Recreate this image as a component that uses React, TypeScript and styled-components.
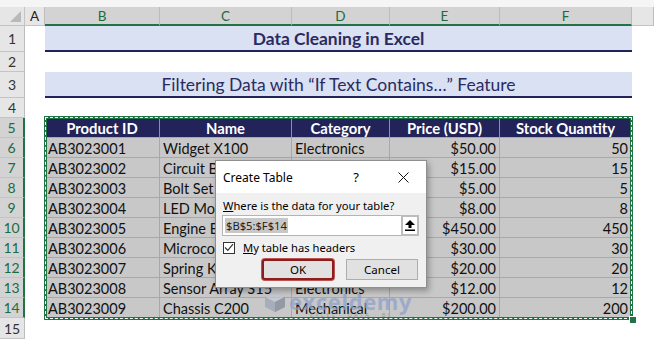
import styled, { createGlobalStyle } from "styled-components";

const GlobalStyle = createGlobalStyle`
  html, body {
    margin: 0;
    padding: 0;
    background: #ffffff;
  }
  body {
    font-family: Lato, "Liberation Sans", sans-serif;
  }
`;

const COLS = "25px 20px 115px 132px 98px 110px 132px 1fr";
const GREEN = "#217346";
const NAVY = "#222359";

type RowData = [string, string, string, string, string];

const rows: RowData[] = [
  ["AB3023001", "Widget X100", "Electronics", "$50.00", "50"],
  ["AB3023002", "Circuit Board", "Electronics", "$15.00", "15"],
  ["AB3023003", "Bolt Set", "Hardware", "$5.00", "5"],
  ["AB3023004", "LED Module", "Electronics", "$8.00", "8"],
  ["AB3023005", "Engine Belt", "Mechanical", "$450.00", "450"],
  ["AB3023006", "Microcontroller", "Electronics", "$30.00", "30"],
  ["AB3023007", "Spring Kit", "Hardware", "$20.00", "20"],
  ["AB3023008", "Sensor Array S15", "Electronics", "$12.00", "12"],
  ["AB3023009", "Chassis C200", "Mechanical", "$200.00", "200"],
];

const headers = ["Product ID", "Name", "Category", "Price (USD)", "Stock Quantity"];

const Page = styled.div`
  position: relative;
  width: 654px;
  height: 339px;
  overflow: hidden;
  background: #ffffff;
`;

const TopBand = styled.div`
  height: 7px;
  background: #f5f5f5;
`;

const Grid = styled.div<{ $h: number }>`
  display: grid;
  grid-template-columns: ${COLS};
  height: ${({ $h }) => $h}px;
`;

const Corner = styled.div`
  position: relative;
  background: #e6e6e6;
  border-right: 1px solid #c4c4c4;
  border-bottom: 1px solid #c4c4c4;
  box-sizing: border-box;
  &::after {
    content: "";
    position: absolute;
    right: 3px;
    bottom: 3px;
    width: 11px;
    height: 11px;
    background: #b9b9b9;
    clip-path: polygon(100% 0, 100% 100%, 0 100%);
  }
`;

const ColHead = styled.div<{ $sel?: boolean }>`
  display: flex;
  align-items: center;
  justify-content: center;
  box-sizing: border-box;
  font-size: 13.5px;
  background: ${({ $sel }) => ($sel ? "#d3d3d3" : "#e6e6e6")};
  color: ${({ $sel }) => ($sel ? "#1c6b40" : "#222222")};
  border-right: 1px solid #bdbdbd;
  border-bottom: ${({ $sel }) => ($sel ? `2px solid ${GREEN}` : "1px solid #c4c4c4")};
`;

const RowHead = styled.div<{ $sel?: boolean }>`
  display: flex;
  align-items: center;
  justify-content: center;
  box-sizing: border-box;
  font-size: 14px;
  background: ${({ $sel }) => ($sel ? "#d3d3d3" : "#e6e6e6")};
  color: ${({ $sel }) => ($sel ? "#1c6b40" : "#333333")};
  border-bottom: 1px solid #c4c4c4;
  border-right: ${({ $sel }) => ($sel ? `2px solid ${GREEN}` : "1px solid #bdbdbd")};
`;

const Blank = styled.div``;

const Banner = styled.div<{ $bold?: boolean }>`
  grid-column: span 5;
  display: flex;
  align-items: center;
  justify-content: center;
  box-sizing: border-box;
  background: #d9e1f2;
  border-bottom: 2px solid ${NAVY};
  color: #2b2b63;
  font-size: ${({ $bold }) => ($bold ? "17.4px" : "17.5px")};
  font-weight: ${({ $bold }) => ($bold ? 700 : 400)};
  padding-top: 1px;
`;

const HeadCell = styled.div`
  display: flex;
  align-items: center;
  justify-content: center;
  box-sizing: border-box;
  background: ${NAVY};
  color: #ffffff;
  font-weight: 700;
  font-size: 14.8px;
  border-right: 1px solid #8e8fa6;
  border-bottom: 1px solid #a9a9a9;
`;

const Cell = styled.div<{ $right?: boolean }>`
  display: flex;
  align-items: center;
  justify-content: ${({ $right }) => ($right ? "flex-end" : "flex-start")};
  box-sizing: border-box;
  padding: 1px 3px 0;
  background: #c8c8c8;
  color: #111111;
  font-size: 14.5px;
  white-space: nowrap;
  overflow: hidden;
  border-right: 1px solid #a8a8a8;
  border-bottom: 1px solid #a8a8a8;
`;

const Ants = styled.div`
  position: absolute;
  left: 44px;
  top: 116px;
  width: 589px;
  height: 204px;
  box-sizing: border-box;
  border: 3px solid ${GREEN};
  pointer-events: none;
  &::before {
    content: "";
    position: absolute;
    inset: -2px;
    border: 1px dashed #ffffff;
  }
  &::after {
    content: "";
    position: absolute;
    right: -6px;
    bottom: -6px;
    width: 6px;
    height: 6px;
    background: ${GREEN};
    border-left: 1px solid #fff;
    border-top: 1px solid #fff;
  }
`;

const Watermark = styled.div`
  position: absolute;
  left: 264px;
  top: 291px;
  display: flex;
  align-items: flex-start;
  gap: 3px;
  opacity: 0.7;
  pointer-events: none;
`;

const WmText = styled.div`
  display: flex;
  flex-direction: column;
  align-items: center;
  color: #8d9fc9;
  font-family: "Open Sans", sans-serif;
`;

const WmName = styled.span`
  font-size: 22px;
  font-weight: 700;
  line-height: 21px;
  letter-spacing: 0.6px;
`;

const WmTag = styled.span`
  font-size: 6px;
  letter-spacing: 2px;
  color: #8a8a8a;
  line-height: 7px;
`;

/* dialog */

const Dialog = styled.div`
  position: absolute;
  left: 215px;
  top: 160px;
  width: 212px;
  height: 128px;
  box-sizing: border-box;
  background: #f0f0f0;
  border: 1px solid #8f8f8f;
  box-shadow: 2px 3px 6px rgba(0, 0, 0, 0.3);
  font-family: "Noto Sans", "Open Sans", sans-serif;
  font-size: 11.2px;
  color: #000;
  display: flex;
  flex-direction: column;
`;

const TitleBar = styled.div`
  height: 32px;
  background: #ffffff;
  display: flex;
  align-items: center;
  padding-left: 7px;
`;

const TitleText = styled.span`
  flex: 1;
  font-size: 12px;
`;

const TitleButton = styled.span<{ $w: number }>`
  width: ${({ $w }) => $w}px;
  display: flex;
  align-items: center;
  justify-content: center;
  font-size: 13px;
`;

const Body = styled.div`
  padding: 4px 7px 0 6px;
  display: flex;
  flex-direction: column;
`;

const Prompt = styled.div`
  height: 17px;
  line-height: 17px;
  padding-left: 1px;
  u {
    text-decoration: underline;
  }
`;

const RefRow = styled.div`
  display: flex;
  height: 21px;
  margin-top: 1px;
`;

const RefInput = styled.div`
  flex: 1;
  box-sizing: border-box;
  background: #ffffff;
  border: 1px solid #b4b4b4;
  border-right: none;
  display: flex;
  align-items: center;
  padding-left: 2px;
`;

const Selected = styled.span`
  background: #c8c8c8;
  color: #222;
  padding: 0 1px;
  line-height: 15px;
`;

const RefButton = styled.div`
  width: 18px;
  box-sizing: border-box;
  border: 2px solid #bcbcbc;
  background: #fff;
  display: flex;
  align-items: center;
  justify-content: center;
`;

const CheckRow = styled.label`
  display: flex;
  align-items: center;
  gap: 8px;
  height: 17px;
  margin-top: 3px;
  padding-left: 1px;
  u {
    text-decoration: underline;
  }
`;

const CheckBox = styled.span`
  width: 12px;
  height: 12px;
  box-sizing: border-box;
  border: 1px solid #333;
  background: #fff;
  display: flex;
  align-items: center;
  justify-content: center;
`;

const ButtonRow = styled.div`
  display: flex;
  justify-content: flex-end;
  gap: 12px;
  margin-top: 3px;
  padding-right: 1px;
`;

const DlgButton = styled.button<{ $focus?: boolean }>`
  width: 72px;
  height: 21px;
  box-sizing: border-box;
  background: #e1e1e1;
  border: ${({ $focus }) => ($focus ? "2px solid #8c1d1d" : "1px solid #adadad")};
  border-radius: ${({ $focus }) => ($focus ? "3px" : "0")};
  box-shadow: ${({ $focus }) => ($focus ? "0 0 0 1px #b55" : "none")};
  font-family: inherit;
  font-size: 11.5px;
  color: #000;
  padding: 0;
`;

function UpArrow() {
  return (
    <svg width="10" height="11" viewBox="0 0 10 11">
      <polygon points="5,0 10,5 0,5" fill="#000" />
      <rect x="3.5" y="4" width="3" height="4" fill="#000" />
      <rect x="0" y="9.5" width="10" height="1.5" fill="#000" />
    </svg>
  );
}

function CloseX() {
  return (
    <svg width="11" height="11" viewBox="0 0 11 11">
      <path d="M0.5 0.5 L10.5 10.5 M10.5 0.5 L0.5 10.5" stroke="#111" strokeWidth="1" />
    </svg>
  );
}

function Check() {
  return (
    <svg width="10" height="9" viewBox="0 0 10 9">
      <path d="M1 4.5 L3.8 7.3 L9 1.2" fill="none" stroke="#333" strokeWidth="1.2" />
    </svg>
  );
}

function WmLogo() {
  return (
    <svg width="22" height="22" viewBox="0 0 22 22">
      <polygon points="11,1 21,6 21,16 11,21 1,16 1,6" fill="#9aa3b5" />
      <polygon points="11,1 21,6 11,11 1,6" fill="#c4cad6" />
      <polygon points="11,11 21,6 21,16 11,21" fill="#7d8799" />
    </svg>
  );
}

export default function App() {
  const colLetters = ["B", "C", "D", "E", "F"];

  return (
    <Page>
      <GlobalStyle />
      <TopBand />
      <Grid $h={19}>
        <Corner />
        <ColHead>A</ColHead>
        {colLetters.map((l) => (
          <ColHead key={l} $sel>
            {l}
          </ColHead>
        ))}
        <ColHead />
      </Grid>

      <Grid $h={26}>
        <RowHead>1</RowHead>
        <Blank />
        <Banner $bold>Data Cleaning in Excel</Banner>
        <Blank />
      </Grid>
      <Grid $h={20}>
        <RowHead>2</RowHead>
      </Grid>
      <Grid $h={26}>
        <RowHead>3</RowHead>
        <Blank />
        <Banner>Filtering Data with “If Text Contains…” Feature</Banner>
        <Blank />
      </Grid>
      <Grid $h={20}>
        <RowHead>4</RowHead>
      </Grid>

      <Grid $h={20}>
        <RowHead $sel>5</RowHead>
        <Blank />
        {headers.map((h) => (
          <HeadCell key={h}>{h}</HeadCell>
        ))}
        <Blank />
      </Grid>
      {rows.map((r, i) => (
        <Grid $h={20} key={r[0]}>
          <RowHead $sel>{i + 6}</RowHead>
          <Blank />
          <Cell>{r[0]}</Cell>
          <Cell>{r[1]}</Cell>
          <Cell>{r[2]}</Cell>
          <Cell $right>{r[3]}</Cell>
          <Cell $right>{r[4]}</Cell>
          <Blank />
        </Grid>
      ))}
      <Grid $h={21}>
        <RowHead>15</RowHead>
      </Grid>

      <Watermark>
        <WmLogo />
        <WmText>
          <WmName>exceldemy</WmName>
          <WmTag>EXCEL · DATA · BI</WmTag>
        </WmText>
      </Watermark>

      <Ants />

      <Dialog>
        <TitleBar>
          <TitleText>Create Table</TitleText>
          <TitleButton $w={48}>?</TitleButton>
          <TitleButton $w={46}>
            <CloseX />
          </TitleButton>
        </TitleBar>
        <Body>
          <Prompt>
            <u>W</u>here is the data for your table?
          </Prompt>
          <RefRow>
            <RefInput>
              <Selected>$B$5:$F$14</Selected>
            </RefInput>
            <RefButton>
              <UpArrow />
            </RefButton>
          </RefRow>
          <CheckRow>
            <CheckBox>
              <Check />
            </CheckBox>
            <span>
              <u>M</u>y table has headers
            </span>
          </CheckRow>
          <ButtonRow>
            <DlgButton $focus>OK</DlgButton>
            <DlgButton>Cancel</DlgButton>
          </ButtonRow>
        </Body>
      </Dialog>
    </Page>
  );
}
